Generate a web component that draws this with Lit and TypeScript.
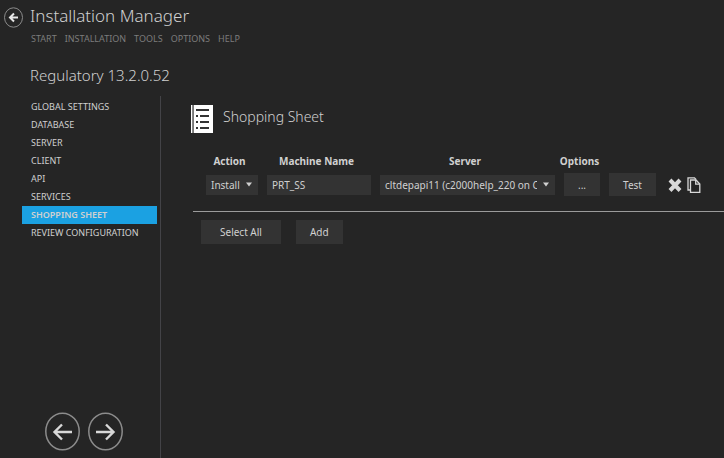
import { LitElement, html, css, svg } from "lit";
import { customElement, state } from "lit/decorators.js";
import { classMap } from "lit/directives/class-map.js";

const MENU = ["START", "INSTALLATION", "TOOLS", "OPTIONS", "HELP"];
const STEPS = [
  "GLOBAL SETTINGS",
  "DATABASE",
  "SERVER",
  "CLIENT",
  "API",
  "SERVICES",
  "SHOPPING SHEET",
  "REVIEW CONFIGURATION",
];

const caret = html`<svg class="caret" viewBox="0 0 6 5" width="6" height="5" aria-hidden="true">
  <path d="M0 0.5H6L3 4.5Z" fill="#d0d0d0" />
</svg>`;

const leftArrow = svg`<path d="M27 20H9M17 12.5L9.5 20L17 27.5" fill="none" stroke="#d8d8d8" stroke-width="2.4" />`;
const rightArrow = svg`<path d="M8 20H26M18 12.5L25.5 20L18 27.5" fill="none" stroke="#d8d8d8" stroke-width="2.4" />`;

@customElement("app-root")
export class AppRoot extends LitElement {
  @state() private current = "SHOPPING SHEET";

  static styles = css`
    :host {
      display: flex;
      flex-direction: column;
      box-sizing: border-box;
      min-height: 100vh;
      background: #252525;
      color: #d0d0d0;
      font-family: "Noto Sans", "Open Sans", sans-serif;
      font-size: 10px;
      line-height: 16px;
    }
    * {
      box-sizing: border-box;
    }
    h1, h2, h3 {
      margin: 0;
      font-weight: 300;
    }
    button, input, select {
      margin: 0;
      border: 0;
      border-radius: 0;
      font: inherit;
      color: inherit;
      background: #333333;
    }
    a {
      color: inherit;
      text-decoration: none;
    }
    svg {
      display: block;
    }
    .header {
      display: grid;
      grid-template-columns: 26px 1fr;
      padding: 4px 0 0 4px;
    }
    .back, .round, .icon {
      padding: 0;
      background: none;
    }
    .back {
      width: 20px;
      height: 22px;
      margin-top: 2px;
    }
    .title {
      font-size: 17px;
      line-height: 24px;
    }
    .menu {
      display: flex;
      gap: 8px;
      padding: 3px 0 0 1px;
      font-size: 9px;
      color: #7c7c7c;
    }
    .product {
      padding-top: 16px;
      font-size: 15px;
      line-height: 24px;
    }
    .body {
      flex: 1;
      display: grid;
      grid-template-columns: 161px 1fr;
      padding-top: 9px;
    }
    .side {
      display: flex;
      flex-direction: column;
      justify-content: space-between;
      padding: 2px 3px 7px 22px;
      border-right: 1px solid #434347;
    }
    .steps {
      margin: 0;
      padding: 0;
      list-style: none;
      font-size: 9px;
      line-height: 18px;
    }
    .step {
      display: block;
      padding-left: 9px;
    }
    .step.active {
      background: #1ba1e2;
      font-weight: 600;
    }
    .pager {
      display: flex;
      gap: 7px;
      padding-left: 23px;
    }
    .main {
      min-width: 0;
      padding: 9px 0 0 30px;
    }
    .heading {
      display: flex;
      gap: 10px;
    }
    .section {
      font-size: 14px;
      line-height: 24px;
    }
    .rows {
      margin: 18px 0 0 2px;
      padding: 0 0 15px 8px;
      border-bottom: 1px solid #9b9b9b;
    }
    .grid {
      width: 100%;
      border-spacing: 0;
      table-layout: fixed;
    }
    .grid th {
      padding: 0 4px 0 0;
      font-size: 10px;
      font-weight: 700;
      line-height: 20px;
      text-align: center;
    }
    .grid td {
      padding: 2px 4px 0 5px;
      vertical-align: middle;
    }
    .w-action { width: 61px; }
    .w-name { width: 113px; }
    .w-server { width: 184px; }
    .w-more { width: 45px; }
    .w-test { width: 56px; }
    .pick {
      display: grid;
      align-items: center;
    }
    .pick > * {
      grid-area: 1 / 1;
    }
    .caret {
      justify-self: end;
      margin-right: 6px;
      pointer-events: none;
    }
    .field {
      display: block;
      width: 100%;
      height: 20px;
      padding: 0 18px 0 5px;
      appearance: none;
    }
    .btn {
      display: block;
      width: 100%;
      height: 23px;
      padding: 0;
    }
    .tools {
      display: flex;
      gap: 5px;
      padding-left: 3px;
    }
    .actions {
      display: flex;
      gap: 15px;
      padding: 8px 0 0 10px;
    }
    .actions .btn {
      width: auto;
      height: 24px;
    }
    .actions .all { padding: 0 19px; }
    .actions .add { padding: 0 14px; }
  `;

  render() {
    return html`
      <header class="header">
        <button class="back" aria-label="Back">
          <svg viewBox="0 0 20 22" width="20" height="22">
            <ellipse cx="9.5" cy="11.5" rx="9" ry="9.7" fill="none" stroke="#8c8c8c" />
            <path d="M14 11.5H6.5M10 7.5L6 11.5L10 15.5" fill="none" stroke="#e6e6e6" stroke-width="2" />
          </svg>
        </button>
        <div>
          <h1 class="title">Installation Manager</h1>
          <nav class="menu">${MENU.map((m) => html`<a href="#">${m}</a>`)}</nav>
          <h2 class="product">Regulatory 13.2.0.52</h2>
        </div>
      </header>
      <div class="body">
        <aside class="side">
          <ul class="steps">
            ${STEPS.map(
              (s) => html`<li>
                <a
                  href="#"
                  class=${classMap({ step: true, active: s === this.current })}
                  @click=${(e: Event) => {
                    e.preventDefault();
                    this.current = s;
                  }}
                  >${s}</a
                >
              </li>`
            )}
          </ul>
          <div class="pager">
            <button class="round" aria-label="Previous">
              <svg viewBox="0 0 36 39" width="36" height="39">
                <ellipse cx="17.5" cy="19.5" rx="16.7" ry="18.3" fill="none" stroke="#8c8c8c" stroke-width="1.5" />
                ${leftArrow}
              </svg>
            </button>
            <button class="round" aria-label="Next">
              <svg viewBox="0 0 36 39" width="36" height="39">
                <ellipse cx="17.5" cy="19.5" rx="16.7" ry="18.3" fill="none" stroke="#8c8c8c" stroke-width="1.5" />
                ${rightArrow}
              </svg>
            </button>
          </div>
        </aside>
        <main class="main">
          <div class="heading">
            <svg viewBox="0 0 22 28" width="22" height="28" aria-hidden="true">
              <path d="M0 0H22V28H0Z" fill="#ffffff" />
              <path d="M1.3 0H2.8V28H1.3Z" fill="#555555" />
              <path
                d="M5 4H18V6H5ZM5 10H7V12H5ZM9 10H18V12H9ZM5 16H7V18H5ZM9 16H18V18H9ZM5 22H7V24H5ZM9 22H18V24H9Z"
                fill="#333333"
              />
            </svg>
            <h3 class="section">Shopping Sheet</h3>
          </div>
          <div class="rows">
            <table class="grid">
              <colgroup>
                <col class="w-action" />
                <col class="w-name" />
                <col class="w-server" />
                <col class="w-more" />
                <col class="w-test" />
                <col />
              </colgroup>
              <thead>
                <tr>
                  <th>Action</th>
                  <th>Machine Name</th>
                  <th>Server</th>
                  <th>Options</th>
                  <td></td>
                  <td></td>
                </tr>
              </thead>
              <tbody>
                <tr>
                  <td>
                    <div class="pick">
                      <select class="field" aria-label="Action"><option>Install</option></select>
                      ${caret}
                    </div>
                  </td>
                  <td><input class="field" aria-label="Machine Name" value="PRT_SS" /></td>
                  <td>
                    <div class="pick">
                      <select class="field" aria-label="Server">
                        <option>cltdepapi11 (c2000help_220 on C</option>
                      </select>
                      ${caret}
                    </div>
                  </td>
                  <td><button class="btn" aria-label="More options">...</button></td>
                  <td><button class="btn">Test</button></td>
                  <td>
                    <div class="tools">
                      <button class="icon" aria-label="Remove">
                        <svg viewBox="0 0 14 16" width="14" height="16">
                          <path d="M2 3L12 13.5M12 3L2 13.5" stroke="#d8d8d8" stroke-width="4" />
                        </svg>
                      </button>
                      <button class="icon" aria-label="Copy">
                        <svg viewBox="0 0 14 16" width="14" height="16" fill="none" stroke="#d8d8d8" stroke-width="1.3">
                          <path d="M3 13H1V0.8H7.5L9 2.5" />
                          <path d="M3.5 3H9L12.8 7V15.3H3.5Z" />
                          <path d="M8.7 3V7.2H12.8" />
                        </svg>
                      </button>
                    </div>
                  </td>
                </tr>
              </tbody>
            </table>
          </div>
          <div class="actions">
            <button class="btn all">Select All</button>
            <button class="btn add">Add</button>
          </div>
        </main>
      </div>
    `;
  }
}
